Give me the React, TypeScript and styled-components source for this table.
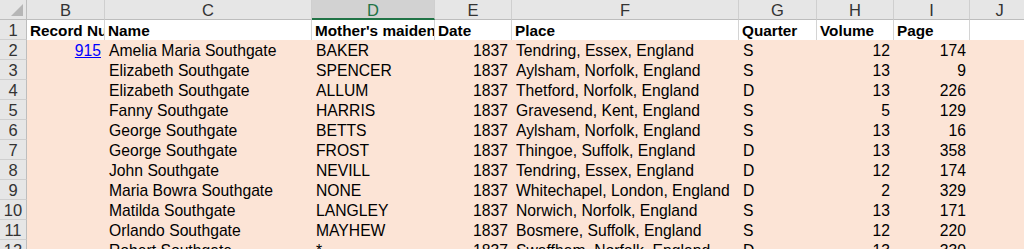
import * as React from 'react';
import styled, { createGlobalStyle, css } from 'styled-components';

type Row = [string, string, string, string, string, string, string, string, string];

const columns = ['B', 'C', 'D', 'E', 'F', 'G', 'H', 'I', 'J'];
const widths = [78, 207, 123, 77, 227, 78, 77, 76, 60];
const selectedColumn = 'D';

const headings = ['Record Number', 'Name', "Mother's maiden name", 'Date', 'Place', 'Quarter', 'Volume', 'Page', ''];

const rows: Row[] = [
    ['915', 'Amelia Maria Southgate', 'BAKER', '1837', 'Tendring, Essex, England', 'S', '12', '174', ''],
    ['', 'Elizabeth Southgate', 'SPENCER', '1837', 'Aylsham, Norfolk, England', 'S', '13', '9', ''],
    ['', 'Elizabeth Southgate', 'ALLUM', '1837', 'Thetford, Norfolk, England', 'D', '13', '226', ''],
    ['', 'Fanny Southgate', 'HARRIS', '1837', 'Gravesend, Kent, England', 'S', '5', '129', ''],
    ['', 'George Southgate', 'BETTS', '1837', 'Aylsham, Norfolk, England', 'S', '13', '16', ''],
    ['', 'George Southgate', 'FROST', '1837', 'Thingoe, Suffolk, England', 'D', '13', '358', ''],
    ['', 'John Southgate', 'NEVILL', '1837', 'Tendring, Essex, England', 'D', '12', '174', ''],
    ['', 'Maria Bowra Southgate', 'NONE', '1837', 'Whitechapel, London, England', 'D', '2', '329', ''],
    ['', 'Matilda Southgate', 'LANGLEY', '1837', 'Norwich, Norfolk, England', 'S', '13', '171', ''],
    ['', 'Orlando Southgate', 'MAYHEW', '1837', 'Bosmere, Suffolk, England', 'S', '12', '220', ''],
    ['', 'Robert Southgate', '*', '1837', 'Swaffham, Norfolk, England', 'D', '13', '330', ''],
];

// columns holding numbers are right aligned, like Excel does
const numeric = [true, false, false, true, false, false, true, true, false];

const App = (): JSX.Element => <>
    <GlobalStyle />
    <Sheet>
        <Corner>
            <svg width="12" height="12" viewBox="0 0 12 12">
                <polygon points="12,0 12,12 0,12" fill="#b6b6b6" />
            </svg>
        </Corner>
        {columns.map(letter => <ColumnHeader key={letter} selected={letter === selectedColumn}>
            {letter}
        </ColumnHeader>)}

        <RowHeader>1</RowHeader>
        {headings.map((text, index) => <HeadingCell key={index}>{text}</HeadingCell>)}

        {rows.map((row, rowIndex) => <React.Fragment key={rowIndex}>
            <RowHeader>{rowIndex + 2}</RowHeader>
            {row.map((value, index) => <DataCell key={index} right={numeric[index]}>
                {index === 0 && value ? <Link>{value}</Link> : value}
            </DataCell>)}
        </React.Fragment>)}
    </Sheet>
</>;

export default App;

const GlobalStyle = createGlobalStyle`
    html, body {
        margin: 0;
        padding: 0;
        background: #ffffff;
        overflow: hidden;
    }
`;

const Sheet = styled.div`
    display: grid;
    grid-template-columns: 27px ${widths.map(w => `${w}px`).join(' ')};
    grid-auto-rows: 20px;
    width: 1024px;
    height: 249px;
    overflow: hidden;
    font-family: Arial, "Liberation Sans", sans-serif;
    font-size: 15.7px;
    color: #000000;
`;

const headerBase = css`
    box-sizing: border-box;
    display: flex;
    align-items: center;
    justify-content: center;
    background: #e6e6e6;
    color: #333333;
    font-size: 16.5px;
    line-height: 20px;
`;

const Corner = styled.div`
    ${headerBase};
    align-items: flex-end;
    justify-content: flex-end;
    padding: 0 3px 3px 0;
    border-right: 1px solid #bdbdbd;
    border-bottom: 1px solid #bdbdbd;
`;

const ColumnHeader = styled.div<{ selected?: boolean }>`
    ${headerBase};
    border-right: 1px solid #cfcfcf;
    border-bottom: 1px solid #bdbdbd;
    ${({ selected }) => selected && css`
        background: #d2d2d2;
        color: #217346;
        border-bottom: 2px solid #217346;
        padding-top: 1px;
    `}
`;

const RowHeader = styled.div`
    ${headerBase};
    padding-top: 1px;
    border-right: 1px solid #bdbdbd;
    border-bottom: 1px solid #cfcfcf;
`;

const cellBase = css`
    box-sizing: border-box;
    padding: 1px 3px 0 4px;
    white-space: nowrap;
    overflow: hidden;
    line-height: 20px;
`;

const HeadingCell = styled.div`
    ${cellBase};
    padding-left: 3px;
    background: #ffffff;
    font-size: 15.3px;
    font-weight: bold;
    border-right: 1px solid #d4d4d4;
    text-overflow: clip;
`;

const DataCell = styled.div<{ right?: boolean }>`
    ${cellBase};
    background: #fce4d6;
    text-align: ${({ right }) => right ? 'right' : 'left'};
    padding-right: 4px;
`;

const Link = styled.span`
    color: #0000ff;
    text-decoration: underline;
`;
